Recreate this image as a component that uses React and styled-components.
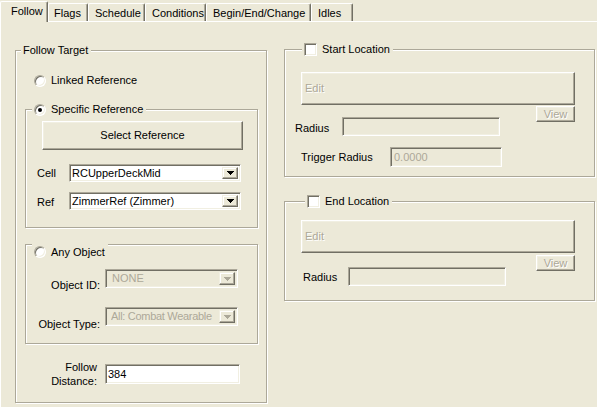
import React from 'react';
import styled, { createGlobalStyle } from 'styled-components';

const BG = '#ECE9D8';
const HI = '#FFFFFF';
const LIGHT = '#F1EFE2';
const SHADOW = '#ACA899';
const DARK = '#716F64';
const DIS = '#ACA899';

const Global = createGlobalStyle`
  html, body { margin: 0; padding: 0; background: ${BG}; }
  body { font-family: "Liberation Sans", Arial, sans-serif; font-size: 11px; color: #000; }
  * { box-sizing: border-box; }
`;

const Window = styled.div`
  width: 597px;
  height: 407px;
  overflow: hidden;
  background: ${BG};
  display: flex;
  flex-direction: column;
`;

const TabStrip = styled.div`
  display: flex;
  align-items: flex-end;
  height: 21px;
  flex-shrink: 0;
`;

const Tab = styled.div`
  width: ${p => p.$w}px;
  height: ${p => (p.$active ? 21 : 18)}px;
  margin-bottom: ${p => (p.$active ? -1 : 0)}px;
  position: relative;
  z-index: ${p => (p.$active ? 1 : 0)};
  background: ${BG};
  border-top: 1px solid ${HI};
  border-left: 1px solid ${HI};
  border-right: 1px solid ${DARK};
  box-shadow: inset -1px 0 ${SHADOW};
  border-radius: 2px 2px 0 0;
  display: flex;
  align-items: center;
  justify-content: flex-start;
  padding-left: ${p => p.$pl}px;
  padding-top: ${p => (p.$active ? 0 : 1)}px;
  padding-bottom: ${p => (p.$active ? 1 : 0)}px;
  line-height: 13px;
  white-space: nowrap;
`;

const Panel = styled.div`
  flex: 1;
  border-top: 1px solid ${HI};
  border-left: 1px solid ${HI};
  display: flex;
  align-items: flex-start;
  gap: 17px;
  padding-left: 14px;
`;

const Column = styled.div`
  display: flex;
  flex-direction: column;
  align-items: flex-start;
  margin-top: ${p => p.$mt}px;
`;

const GroupBox = styled.div`
  display: flex;
  flex-direction: column;
  align-items: flex-start;
  flex-shrink: 0;
  border: 1px solid ${SHADOW};
  box-shadow: inset 1px 1px ${HI}, 1px 1px ${HI};
  width: ${p => p.$w}px;
  ${p => (p.$h ? `height: ${p.$h}px;` : '')}
  margin: ${p => p.$m || '0'};
  padding-bottom: ${p => p.$pb || 0}px;
`;

const Legend = styled.div`
  display: flex;
  align-items: center;
  gap: 5px;
  height: ${p => p.$h || 13}px;
  margin: ${p => (p.$mt === undefined ? -7 : p.$mt)}px 0 0 ${p => p.$ml}px;
  padding: 0 3px 0 2px;
  background: ${BG};
  line-height: 13px;
  white-space: nowrap;
`;

const RadioCircle = styled.span`
  width: 12px;
  height: 12px;
  flex-shrink: 0;
  border-radius: 50%;
  background: #fff;
  border: 1px solid;
  border-color: ${SHADOW} ${HI} ${HI} ${SHADOW};
  box-shadow: inset 1px 1px ${DARK}, inset -1px -1px ${LIGHT};
  display: flex;
  align-items: center;
  justify-content: center;
  &::after {
    content: '';
    width: 4px;
    height: 4px;
    border-radius: 50%;
    background: ${p => (p.$checked ? '#000' : 'transparent')};
  }
`;

const CheckBox = styled.span`
  width: 13px;
  height: 13px;
  flex-shrink: 0;
  background: #fff;
  border: 1px solid;
  border-color: ${SHADOW} ${HI} ${HI} ${SHADOW};
  box-shadow: inset 1px 1px ${DARK}, inset -1px -1px ${LIGHT};
`;

const OptionRow = styled.div`
  display: flex;
  align-items: center;
  gap: 5px;
  height: 13px;
  line-height: 13px;
  margin: ${p => p.$m};
  white-space: nowrap;
`;

const Button = styled.button`
  display: flex;
  align-items: center;
  justify-content: ${p => (p.$left ? 'flex-start' : 'center')};
  flex-shrink: 0;
  width: ${p => p.$w}px;
  height: ${p => p.$h}px;
  margin: ${p => p.$m || '0'};
  padding: 0 0 0 ${p => (p.$left ? 3 : 0)}px;
  background: ${BG};
  border: 1px solid;
  border-color: ${HI} ${DARK} ${DARK} ${HI};
  box-shadow: inset -1px -1px ${SHADOW}, inset 1px 1px ${LIGHT};
  font: inherit;
  line-height: 13px;
  color: ${p => (p.$disabled ? DIS : '#000')};
  text-shadow: ${p => (p.$disabled ? `1px 1px ${HI}` : 'none')};
  border-radius: 0;
`;

const Field = styled.div`
  display: flex;
  align-items: center;
  flex-shrink: 0;
  width: ${p => p.$w}px;
  height: ${p => p.$h}px;
  margin: ${p => p.$m || '0'};
  padding: 2px 2px 2px ${p => p.$pl || 2}px;
  background: ${p => (p.$disabled ? BG : '#fff')};
  border: 1px solid;
  border-color: ${SHADOW} ${HI} ${HI} ${SHADOW};
  box-shadow: inset 1px 1px ${DARK}, inset -1px -1px ${LIGHT};
  color: ${p => (p.$disabled ? DIS : '#000')};
  line-height: 13px;
  white-space: nowrap;
  overflow: hidden;
`;

const FieldText = styled.span`
  flex: 1;
  overflow: hidden;
  white-space: nowrap;
  letter-spacing: ${p => (p.$tight ? '-0.3px' : 'normal')};
`;

const DropButton = styled.span`
  width: 16px;
  height: 100%;
  flex-shrink: 0;
  display: flex;
  align-items: center;
  justify-content: center;
  background: ${BG};
  border: 1px solid;
  border-color: ${LIGHT} ${DARK} ${DARK} ${LIGHT};
  box-shadow: inset -1px -1px ${SHADOW}, inset 1px 1px ${HI};
`;

const FormRow = styled.div`
  display: flex;
  align-items: ${p => p.$align || 'center'};
  gap: ${p => p.$gap || 0}px;
  margin: ${p => p.$m || '0'};
  padding-left: ${p => p.$pl || 0}px;
  ${p => (p.$stretch ? 'align-self: stretch;' : '')}
`;

const Label = styled.div`
  width: ${p => p.$w}px;
  flex-shrink: 0;
  text-align: ${p => (p.$right ? 'right' : 'left')};
  line-height: ${p => p.$lh || 13}px;
  padding-top: ${p => p.$pt || 0}px;
  margin-top: ${p => p.$mt || 0}px;
  white-space: nowrap;
`;

const Stack = styled.div`
  display: flex;
  align-items: flex-start;
  margin: ${p => p.$m || '0'};
`;

const SideButtonSlot = styled.div`
  margin-left: auto;
  margin-right: 19px;
`;

const Arrow = ({ disabled }) => (
  <svg width="7" height="4" viewBox="0 0 7 4" shapeRendering="crispEdges" style={{ display: 'block' }}>
    <path d="M0 0h7v1H0z M1 1h5v1H1z M2 2h3v1H2z M3 3h1v1H3z" fill={disabled ? DIS : '#000'} />
  </svg>
);

const Combo = ({ value, w, h, disabled, pl, tight }) => (
  <Field $w={w} $h={h} $disabled={disabled} $pl={pl}>
    <FieldText $tight={tight}>{value}</FieldText>
    <DropButton>
      <Arrow disabled={disabled} />
    </DropButton>
  </Field>
);

const tabs = [
  { label: 'Follow', w: 48, pl: 10, active: true },
  { label: 'Flags', w: 40, pl: 5 },
  { label: 'Schedule', w: 57, pl: 6 },
  { label: 'Conditions', w: 61, pl: 6 },
  { label: 'Begin/End/Change', w: 105, pl: 6 },
  { label: 'Idles', w: 42, pl: 6 },
];

export default function App() {
  return (
    <>
      <Global />
      <Window>
        <TabStrip>
          {tabs.map(t => (
            <Tab key={t.label} $w={t.w} $pl={t.pl} $active={t.active}>
              {t.label}
            </Tab>
          ))}
        </TabStrip>
        <Panel>
          <Column $mt={28}>
            <GroupBox $w={252} $h={353}>
              <Legend $ml={5}>Follow Target</Legend>
              <OptionRow $m="17px 0 0 18px">
                <RadioCircle />
                Linked Reference
              </OptionRow>

              <GroupBox $w={233} $m="22px 0 0 9px" $pb={17}>
                <Legend $ml={6}>
                  <RadioCircle $checked />
                  Specific Reference
                </Legend>
                <Button $w={201} $h={29} $m="5px 0 0 16px">Select Reference</Button>
                <FormRow $m="14px 0 0 11px">
                  <Label $w={32}>Cell</Label>
                  <Combo value="RCUpperDeckMid" w={172} h={18} />
                </FormRow>
                <FormRow $m="10px 0 0 11px">
                  <Label $w={32} $pt={2}>Ref</Label>
                  <Combo value="ZimmerRef (Zimmer)" w={172} h={18} />
                </FormRow>
              </GroupBox>

              <GroupBox $w={233} $m="16px 0 0 9px" $pb={12}>
                <Legend $ml={6} $mt={-4} $h={22}>
                  <RadioCircle />
                  Any Object
                </Legend>
                <FormRow $align="flex-start" $gap={5} $m="6px 0 0 0">
                  <Label $w={74} $right $pt={10}>Object ID:</Label>
                  <Combo value="NONE" w={133} h={19} disabled pl={6} />
                </FormRow>
                <FormRow $align="flex-start" $gap={5} $m="15px 0 0 0">
                  <Label $w={74} $right $pt={11}>Object Type:</Label>
                  <Combo value="All: Combat Wearable" w={133} h={19} disabled pl={5} tight />
                </FormRow>
              </GroupBox>

              <FormRow $align="flex-start" $gap={8} $m="20px 0 0 0">
                <Label $w={81} $right $lh={14} $mt={-4}>
                  Follow
                  <br />
                  Distance:
                </Label>
                <Field $w={135} $h={20}>384</Field>
              </FormRow>
            </GroupBox>
          </Column>

          <Column $mt={27}>
            <GroupBox $w={311} $h={128}>
              <Legend $ml={17}>
                <CheckBox />
                Start Location
              </Legend>
              <Button $w={274} $h={33} $m="16px 0 0 16px" $left $disabled>Edit</Button>
              <FormRow $align="flex-start" $stretch $m="1px 0 0 0" $pl={10}>
                <Stack $m="11px 0 0 0">
                  <Label $w={47} $pt={5}>Radius</Label>
                  <Field $w={158} $h={19} $disabled />
                </Stack>
                <SideButtonSlot>
                  <Button $w={39} $h={16} $disabled>View</Button>
                </SideButtonSlot>
              </FormRow>
              <FormRow $m="11px 0 0 16px">
                <Label $w={89}>Trigger Radius</Label>
                <Field $w={112} $h={20} $disabled $pl={3}>0.0000</Field>
              </FormRow>
            </GroupBox>

            <GroupBox $w={311} $h={100} $m="24px 0 0 0">
              <Legend $ml={20}>
                <CheckBox />
                End Location
              </Legend>
              <Button $w={274} $h={33} $m="12px 0 0 16px" $left $disabled>Edit</Button>
              <FormRow $align="flex-start" $stretch $m="2px 0 0 0" $pl={18}>
                <Stack $m="12px 0 0 0">
                  <Label $w={45} $pt={4}>Radius</Label>
                  <Field $w={158} $h={19} $disabled />
                </Stack>
                <SideButtonSlot>
                  <Button $w={39} $h={16} $disabled>View</Button>
                </SideButtonSlot>
              </FormRow>
            </GroupBox>
          </Column>
        </Panel>
      </Window>
    </>
  );
}
